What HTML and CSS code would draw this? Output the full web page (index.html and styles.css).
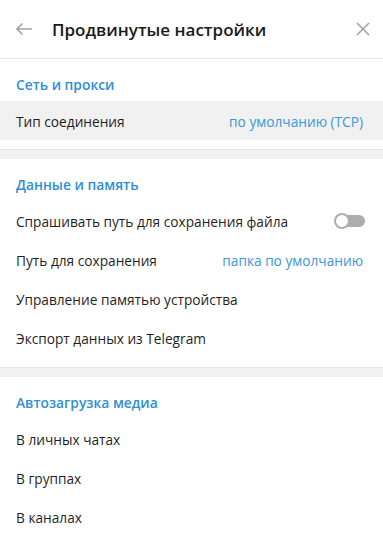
FILE: index.html
```html
<!DOCTYPE html>
<html lang="ru">
<head>
  <meta charset="UTF-8">
  <meta name="viewport" content="width=device-width, initial-scale=1.0">
  <title>Продвинутые настройки</title>
  <link rel="stylesheet" href="styles.css">
</head>
<body>

  <div class="panel">
    <!-- Заголовок -->
    <div class="header">
      <svg class="back" width="18" height="14" viewBox="0 0 18 14">
        <path d="M17 7H2M7.5 1.5L2 7l5.5 5.5" fill="none" stroke="#a2a2a2" stroke-width="1.6"/>
      </svg>
      <h1>Продвинутые настройки</h1>
      <svg class="close" width="14" height="14" viewBox="0 0 14 14">
        <path d="M1 1l12 12M13 1L1 13" fill="none" stroke="#a2a2a2" stroke-width="1.6"/>
      </svg>
    </div>

    <!-- Сеть и прокси -->
    <div class="section net">
      <h2>Сеть и прокси</h2>
      <div class="row active">
        <span>Тип соединения</span>
        <span class="value">по умолчанию (TCP)</span>
      </div>
    </div>

    <div class="divider"></div>

    <!-- Данные и память -->
    <div class="section">
      <h2>Данные и память</h2>
      <div class="row">
        <span>Спрашивать путь для сохранения файла</span>
        <span class="toggle"></span>
      </div>
      <div class="row">
        <span>Путь для сохранения</span>
        <span class="value">папка по умолчанию</span>
      </div>
      <div class="row"><span>Управление памятью устройства</span></div>
      <div class="row"><span>Экспорт данных из Telegram</span></div>
    </div>

    <div class="divider"></div>

    <!-- Автозагрузка медиа -->
    <div class="section">
      <h2>Автозагрузка медиа</h2>
      <div class="row"><span>В личных чатах</span></div>
      <div class="row"><span>В группах</span></div>
      <div class="row"><span>В каналах</span></div>
    </div>
  </div>

</body>
</html>
```

FILE: styles.css
```css
body {
  margin: 0;
  padding: 0;
  background-color: #fff;
  font-family: "Open Sans", "Liberation Sans", sans-serif;
  overflow: hidden;
}
.panel {
  width: 383px;
}
.header {
  height: 58px;
  display: flex;
  align-items: center;
  border-bottom: 1px solid #e8e8e8;
  padding: 0 13px 0 15px;
}
.header h1 {
  flex: 1;
  margin: 0 0 0 19px;
  font-size: 17px;
  font-weight: 600;
  color: #1a1a1a;
}
.section {
  padding: 16px 0 10px;
}
.section.net {
  padding-bottom: 9px;
}
.section h2 {
  margin: 0 0 6px;
  padding: 0 16px;
  height: 20px;
  line-height: 20px;
  font-size: 13.8px;
  font-weight: 600;
  color: #2f8fd6;
}
.row {
  height: 39px;
  display: flex;
  align-items: center;
  justify-content: space-between;
  padding: 1px 20px 0 16px;
  box-sizing: border-box;
  font-size: 13.7px;
  color: #1f1f1f;
}
.row.active {
  background-color: #f1f1f1;
}
.row .value {
  color: #3a98d8;
}
.toggle {
  position: relative;
  width: 30px;
  height: 12px;
  margin-right: -2px;
  border-radius: 6px;
  background-color: #adadad;
}
.toggle::before {
  content: "";
  position: absolute;
  left: -1px;
  top: -2px;
  width: 12px;
  height: 12px;
  border: 2px solid #adadad;
  border-radius: 50%;
  background-color: #fff;
}
.divider {
  height: 10px;
  background-color: #f1f1f1;
  border-top: 1px solid #e6e6e6;
  box-sizing: border-box;
}
```
